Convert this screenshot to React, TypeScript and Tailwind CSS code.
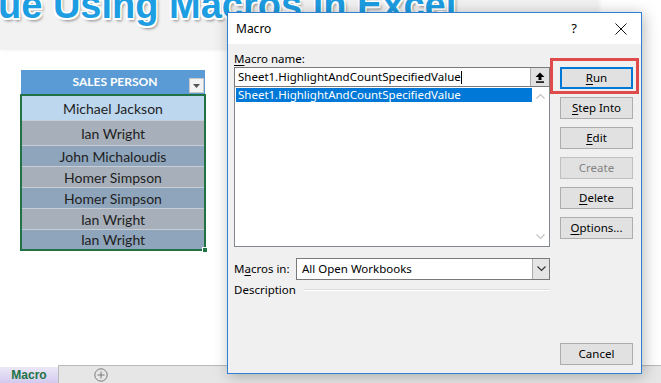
import { ReactNode } from 'react'

const NAMES = [
  { name: 'Ian Wright', tone: 'bg-[#a7b0ba]', h: 'h-[25px]' },
  { name: 'John Michaloudis', tone: 'bg-[#8fa5bc]', h: 'h-[21px]' },
  { name: 'Homer Simpson', tone: 'bg-[#a7b0ba]', h: 'h-[21px]' },
  { name: 'Homer Simpson', tone: 'bg-[#8fa5bc]', h: 'h-[21px]' },
  { name: 'Ian Wright', tone: 'bg-[#a7b0ba]', h: 'h-[21px]' },
  { name: 'Ian Wright', tone: 'bg-[#8fa5bc]', h: 'h-[20px]' },
]

// Windows-style push button, optional underlined access key
function WinButton({ children, disabled, isDefault }: { children: ReactNode; disabled?: boolean; isDefault?: boolean }) {
  return (
    <div
      className={
        'h-[22px] w-[73px] flex items-center justify-center bg-[#e1e1e1] ' +
        (isDefault ? 'border-2 border-[#0078d7]' : 'border border-[#adadad]') +
        (disabled ? ' text-[#838383] border-[#bfbfbf]' : ' text-black')
      }
    >
      {children}
    </div>
  )
}

function Key({ c }: { c: string }) {
  return <span className="underline underline-offset-2 decoration-1">{c}</span>
}

function Chevron({ up, color }: { up?: boolean; color: string }) {
  return (
    <svg width="9" height="6" viewBox="0 0 9 6" className={up ? 'rotate-180' : ''}>
      <path d="M0.5 0.5 L4.5 4.5 L8.5 0.5" fill="none" stroke={color} strokeWidth="1.2" />
    </svg>
  )
}

function MacroDialog() {
  return (
    <div className="absolute left-[227px] top-[12px] w-[415px] h-[362px] border border-[#2f80d2] bg-[#f0f0f0] flex flex-col shadow-[2px_2px_14px_rgba(0,0,0,0.28)] font-['Noto_Sans',sans-serif] text-[11.5px] text-black">
      {/* title bar */}
      <div className="h-[31px] bg-white flex items-center pl-[8px] pr-[14px]">
        <span className="text-[12px]">Macro</span>
        <span className="ml-auto mr-[38px] text-[13px]">?</span>
        <svg width="12" height="12" viewBox="0 0 12 12">
          <path d="M0.5 0.5 L11.5 11.5 M11.5 0.5 L0.5 11.5" stroke="#111" strokeWidth="1" />
        </svg>
      </div>

      {/* body */}
      <div className="relative flex-1 flex gap-[10px] pl-[6px] pr-[8px] pb-[8px]">
        <div className="w-[316px] flex flex-col pt-[7px]">
          <div className="h-[16px] leading-[16px]">
            <Key c="M" />acro name:
          </div>
          <div className="h-[20px] bg-white border border-[#7a7a7a] flex items-center">
            <span className="pl-[3px] leading-none">Sheet1.HighlightAndCountSpecifiedValue</span>
            <span className="w-px h-[13px] bg-black" />
            <div className="ml-auto h-full w-[19px] bg-[#e1e1e1] border-l border-[#adadad] flex items-center justify-center">
              <svg width="10" height="11" viewBox="0 0 10 11">
                <path d="M5 0.5 L9.5 5 H6.5 V8 H3.5 V5 H0.5 Z" fill="#000" />
                <rect x="1" y="9.3" width="8" height="1.5" fill="#000" />
              </svg>
            </div>
          </div>
          <div className="h-[160px] bg-white border border-t-0 border-[#828790] flex">
            <div className="flex-1 pt-[1px] pl-[1px]">
              <div className="h-[14px] bg-[#0078d7] text-white leading-[14px] pl-[2px]">Sheet1.HighlightAndCountSpecifiedValue</div>
            </div>
            <div className="w-[17px] flex flex-col items-center justify-between py-[6px]">
              <Chevron up color="#c3c3c3" />
              <Chevron color="#c3c3c3" />
            </div>
          </div>
          <div className="mt-[11px] flex items-center">
            <span className="w-[62px]">
              M<Key c="a" />cros in:
            </span>
            <div className="flex-1 h-[22px] bg-white border border-[#7a7a7a] flex items-center">
              <span className="pl-[5px]">All Open Workbooks</span>
              <div className="ml-auto h-full w-[17px] bg-[#e5e5e5] border-l border-[#adadad] flex items-center justify-center">
                <Chevron color="#333" />
              </div>
            </div>
          </div>
          <div className="mt-[2px] h-[16px] flex items-center gap-[8px]">
            <span>Description</span>
            <div className="flex-1 border-t border-[#dcdcdc] border-b border-b-white" />
          </div>
        </div>

        <div className="w-[73px] flex flex-col gap-[8px] pt-[23px]">
          <WinButton isDefault>
            <Key c="R" />un
          </WinButton>
          <WinButton>
            <Key c="S" />tep Into
          </WinButton>
          <WinButton>
            <Key c="E" />dit
          </WinButton>
          <WinButton disabled>Create</WinButton>
          <WinButton>
            <Key c="D" />elete
          </WinButton>
          <WinButton>
            <Key c="O" />ptions...
          </WinButton>
          <div className="mt-auto">
            <WinButton>Cancel</WinButton>
          </div>
        </div>

        {/* red highlight around Run */}
        <div className="absolute left-[322px] top-[14px] w-[89px] h-[36px] border-[3px] border-[#df4b4b]" />
      </div>
    </div>
  )
}

export default function App() {
  return (
    <div className="relative w-[661px] h-[383px] overflow-hidden bg-white flex flex-col">
      {/* title banner */}
      <div className="h-[50px] w-[598px] bg-[#f2f2f2] overflow-hidden shadow-[2px_0_4px_rgba(0,0,0,0.06)]">
        <div className="-mt-[14px] -ml-[2px] whitespace-nowrap font-['Liberation_Sans',Arial,sans-serif] font-bold text-[38px] leading-none text-[#1d9de2] [text-shadow:-1.5px_-1.5px_0_#fff,1.5px_-1.5px_0_#fff,-1.5px_1.5px_0_#fff,1.5px_1.5px_0_#fff,2px_3px_3px_rgba(0,0,0,0.45)]">
          ue Using Macros in Excel
        </div>
      </div>

      {/* sheet area */}
      <div className="flex-1 pt-[20px] pl-[21px] font-['Lato',sans-serif]">
        <div className="w-[184px] h-[24px] bg-[#5b9bd5] flex items-center relative">
          <span className="flex-1 text-center text-white font-bold text-[12px] pl-[4px]">SALES PERSON</span>
          <div className="absolute right-[1px] top-[8px] w-[15px] h-[15px] bg-[#f3f3f3] border border-[#c8c8c8] flex items-center justify-center">
            <svg width="7" height="4" viewBox="0 0 7 4">
              <path d="M0 0 H7 L3.5 4 Z" fill="#555" />
            </svg>
          </div>
        </div>
        <div className="relative w-[186px] -ml-px border-2 border-[#217346] text-[14px] text-[#1e1e1e]">
          <div className="h-[24px] bg-[#bdd7ee] flex items-center justify-center">Michael Jackson</div>
          {NAMES.map((r, i) => (
            <div key={i} className={`${r.h} ${r.tone} border-t border-[#c7cdd4] flex items-center justify-center`}>
              {r.name}
            </div>
          ))}
          <div className="absolute -right-[4px] -bottom-[4px] w-[6px] h-[6px] bg-[#217346] border border-white" />
        </div>
      </div>

      {/* sheet tabs */}
      <div className="h-[18px] flex items-end">
        <div className="w-[58px] h-[16px] bg-gradient-to-b from-[#ece8f7] to-[#d3caee] flex items-center justify-center font-['Liberation_Sans',Arial,sans-serif] font-bold text-[12px] text-[#217346]">
          Macro
        </div>
        <div className="flex-1 h-[18px] bg-[#e6e6e6] border-l border-t border-[#b9b9b9] pl-[35px] flex items-center">
          <svg width="14" height="14" viewBox="0 0 14 14">
            <circle cx="7" cy="7" r="6.2" fill="none" stroke="#7a7a7a" strokeWidth="1" />
            <path d="M7 3.5 V10.5 M3.5 7 H10.5" stroke="#7a7a7a" strokeWidth="1" />
          </svg>
        </div>
      </div>

      <MacroDialog />
    </div>
  )
}
